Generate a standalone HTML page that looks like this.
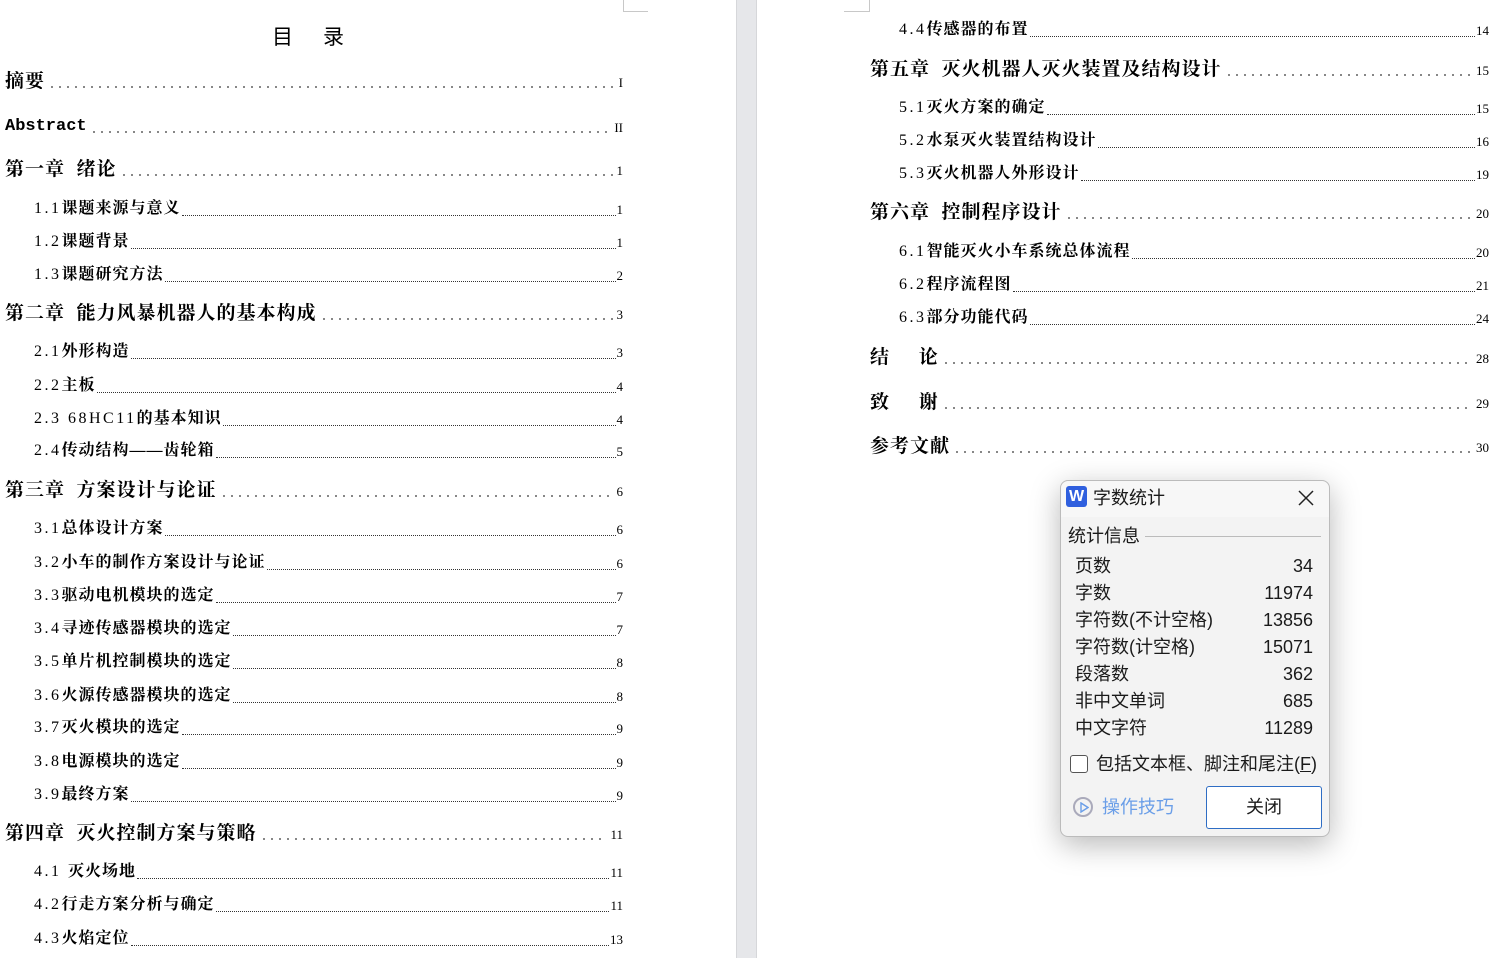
<!DOCTYPE html>
<html><head><meta charset="utf-8"><style>
*{margin:0;padding:0;box-sizing:border-box}
body{width:1496px;height:958px;overflow:hidden;background:#fff;position:relative;font-family:"Liberation Serif","Noto Serif CJK SC",serif;color:#000}
.gut{position:absolute;left:736px;top:0;width:21px;height:958px;background:#e6e7ea;border-left:1px solid #d6d7da;border-right:1px solid #d6d7da}
.cm{position:absolute;border-color:#c8c8c8;border-style:solid;border-width:0}
.r{position:absolute;display:flex;align-items:flex-end;height:24px;white-space:nowrap}
.r .t{line-height:24px;font-weight:bold}
.r .t i{font-style:normal;font-weight:normal;letter-spacing:2.5px}
.r .l{flex:1;margin:0 3px 6px 3px;height:2px}
.c .t{font-size:19px;letter-spacing:1px}
.c .l{background:radial-gradient(circle,#666 0.8px,transparent 1.1px) 0 0/8px 2px repeat-x}
.s .t{font-size:16px;letter-spacing:1px}
.s .l{border-bottom:1px dotted #333;height:1px;margin-bottom:5px;margin-left:1px;margin-right:1px}
.r .n{font-size:13px;line-height:22px}
.dlg{position:absolute;left:1060px;top:480px;width:270px;height:357px;background:#f3f3f3;border:1px solid #bbb;border-radius:8px;box-shadow:0 8px 30px rgba(0,0,0,.28);font-family:"Liberation Sans","Noto Sans CJK SC",sans-serif;color:#1a1a1a}
.dlg .row{position:absolute;left:14px;right:16px;display:flex;justify-content:space-between;font-size:18px;line-height:26px}
</style></head><body>
<div class="cm" style="left:623px;top:0;width:25px;height:12px;border-left-width:1px;border-bottom-width:1px"></div>
<div class="cm" style="left:844px;top:0;width:26px;height:12px;border-right-width:1px;border-bottom-width:1px"></div>
<div class="gut"></div>
<div style="position:absolute;left:272px;top:21px;font-size:21px;font-family:'Noto Sans CJK SC',sans-serif;letter-spacing:30px">目录</div>

<div class="r c" style="left:5px;width:618px;top:70px"><span class="t">摘要</span><span class="l"></span><span class="n">I</span></div>
<div class="r c" style="left:5px;width:618px;top:115px"><span class="t" style="font-family:'Liberation Mono',monospace;font-size:17px;letter-spacing:0">Abstract</span><span class="l"></span><span class="n">II</span></div>
<div class="r c" style="left:5px;width:618px;top:158px"><span class="t">第一章&nbsp;&nbsp;绪论</span><span class="l"></span><span class="n">1</span></div>
<div class="r s" style="left:34px;width:589px;top:197px"><span class="t"><i>1.1</i>课题来源与意义</span><span class="l"></span><span class="n">1</span></div>
<div class="r s" style="left:34px;width:589px;top:230px"><span class="t"><i>1.2</i>课题背景</span><span class="l"></span><span class="n">1</span></div>
<div class="r s" style="left:34px;width:589px;top:263px"><span class="t"><i>1.3</i>课题研究方法</span><span class="l"></span><span class="n">2</span></div>
<div class="r c" style="left:5px;width:618px;top:302px"><span class="t">第二章&nbsp;&nbsp;能力风暴机器人的基本构成</span><span class="l"></span><span class="n">3</span></div>
<div class="r s" style="left:34px;width:589px;top:340px"><span class="t"><i>2.1</i>外形构造</span><span class="l"></span><span class="n">3</span></div>
<div class="r s" style="left:34px;width:589px;top:374px"><span class="t"><i>2.2</i>主板</span><span class="l"></span><span class="n">4</span></div>
<div class="r s" style="left:34px;width:589px;top:407px"><span class="t"><i>2.3 68HC11</i>的基本知识</span><span class="l"></span><span class="n">4</span></div>
<div class="r s" style="left:34px;width:589px;top:439px"><span class="t"><i>2.4</i>传动结构——齿轮箱</span><span class="l"></span><span class="n">5</span></div>
<div class="r c" style="left:5px;width:618px;top:479px"><span class="t">第三章&nbsp;&nbsp;方案设计与论证</span><span class="l"></span><span class="n">6</span></div>
<div class="r s" style="left:34px;width:589px;top:517px"><span class="t"><i>3.1</i>总体设计方案</span><span class="l"></span><span class="n">6</span></div>
<div class="r s" style="left:34px;width:589px;top:551px"><span class="t"><i>3.2</i>小车的制作方案设计与论证</span><span class="l"></span><span class="n">6</span></div>
<div class="r s" style="left:34px;width:589px;top:584px"><span class="t"><i>3.3</i>驱动电机模块的选定</span><span class="l"></span><span class="n">7</span></div>
<div class="r s" style="left:34px;width:589px;top:617px"><span class="t"><i>3.4</i>寻迹传感器模块的选定</span><span class="l"></span><span class="n">7</span></div>
<div class="r s" style="left:34px;width:589px;top:650px"><span class="t"><i>3.5</i>单片机控制模块的选定</span><span class="l"></span><span class="n">8</span></div>
<div class="r s" style="left:34px;width:589px;top:684px"><span class="t"><i>3.6</i>火源传感器模块的选定</span><span class="l"></span><span class="n">8</span></div>
<div class="r s" style="left:34px;width:589px;top:716px"><span class="t"><i>3.7</i>灭火模块的选定</span><span class="l"></span><span class="n">9</span></div>
<div class="r s" style="left:34px;width:589px;top:750px"><span class="t"><i>3.8</i>电源模块的选定</span><span class="l"></span><span class="n">9</span></div>
<div class="r s" style="left:34px;width:589px;top:783px"><span class="t"><i>3.9</i>最终方案</span><span class="l"></span><span class="n">9</span></div>
<div class="r c" style="left:5px;width:618px;top:822px"><span class="t">第四章&nbsp;&nbsp;灭火控制方案与策略</span><span class="l"></span><span class="n">11</span></div>
<div class="r s" style="left:34px;width:589px;top:860px"><span class="t"><i>4.1 </i>灭火场地</span><span class="l"></span><span class="n">11</span></div>
<div class="r s" style="left:34px;width:589px;top:893px"><span class="t"><i>4.2</i>行走方案分析与确定</span><span class="l"></span><span class="n">11</span></div>
<div class="r s" style="left:34px;width:589px;top:927px"><span class="t"><i>4.3</i>火焰定位</span><span class="l"></span><span class="n">13</span></div>

<div class="r s" style="left:899px;width:590px;top:18px"><span class="t"><i>4.4</i>传感器的布置</span><span class="l"></span><span class="n">14</span></div>
<div class="r c" style="left:870px;width:619px;top:58px"><span class="t">第五章&nbsp;&nbsp;灭火机器人灭火装置及结构设计</span><span class="l"></span><span class="n">15</span></div>
<div class="r s" style="left:899px;width:590px;top:96px"><span class="t"><i>5.1</i>灭火方案的确定</span><span class="l"></span><span class="n">15</span></div>
<div class="r s" style="left:899px;width:590px;top:129px"><span class="t"><i>5.2</i>水泵灭火装置结构设计</span><span class="l"></span><span class="n">16</span></div>
<div class="r s" style="left:899px;width:590px;top:162px"><span class="t"><i>5.3</i>灭火机器人外形设计</span><span class="l"></span><span class="n">19</span></div>
<div class="r c" style="left:870px;width:619px;top:201px"><span class="t">第六章&nbsp;&nbsp;控制程序设计</span><span class="l"></span><span class="n">20</span></div>
<div class="r s" style="left:899px;width:590px;top:240px"><span class="t"><i>6.1</i>智能灭火小车系统总体流程</span><span class="l"></span><span class="n">20</span></div>
<div class="r s" style="left:899px;width:590px;top:273px"><span class="t"><i>6.2</i>程序流程图</span><span class="l"></span><span class="n">21</span></div>
<div class="r s" style="left:899px;width:590px;top:306px"><span class="t"><i>6.3</i>部分功能代码</span><span class="l"></span><span class="n">24</span></div>
<div class="r c" style="left:870px;width:619px;top:346px"><span class="t">结&nbsp;&nbsp;&nbsp;&nbsp;&nbsp;论</span><span class="l"></span><span class="n">28</span></div>
<div class="r c" style="left:870px;width:619px;top:391px"><span class="t">致&nbsp;&nbsp;&nbsp;&nbsp;&nbsp;谢</span><span class="l"></span><span class="n">29</span></div>
<div class="r c" style="left:870px;width:619px;top:435px"><span class="t">参考文献</span><span class="l"></span><span class="n">30</span></div>

<div class="dlg">
 <div style="position:absolute;left:0;top:0;right:0;height:36px;background:#f7f7f7;border-radius:8px 8px 0 0"></div>
 <div style="position:absolute;left:5px;top:5px;width:21px;height:21px;background:#2f5fde;border-radius:3px;color:#fff;font-weight:bold;font-size:16px;line-height:21px;text-align:center">W</div>
 <div style="position:absolute;left:32px;top:4px;font-size:18px;line-height:26px">字数统计</div>
 <svg style="position:absolute;left:237px;top:9px" width="16" height="16"><path d="M1 1L15 15M15 1L1 15" stroke="#222" stroke-width="1.5"/></svg>
 <div style="position:absolute;left:7px;top:42px;font-size:18px;line-height:26px">统计信息</div>
 <div style="position:absolute;left:84px;right:8px;top:55px;border-top:1px solid #bbb"></div>
 <div class="row" style="top:72px"><span>页数</span><span>34</span></div>
 <div class="row" style="top:99px"><span>字数</span><span>11974</span></div>
 <div class="row" style="top:126px"><span>字符数(不计空格)</span><span>13856</span></div>
 <div class="row" style="top:153px"><span>字符数(计空格)</span><span>15071</span></div>
 <div class="row" style="top:180px"><span>段落数</span><span>362</span></div>
 <div class="row" style="top:207px"><span>非中文单词</span><span>685</span></div>
 <div class="row" style="top:234px"><span>中文字符</span><span>11289</span></div>
 <div style="position:absolute;left:9px;top:274px;width:18px;height:18px;border:1px solid #555;border-radius:3px;background:#fff"></div>
 <div style="position:absolute;left:35px;top:270px;font-size:18px;line-height:26px">包括文本框、脚注和尾注(<u>F</u>)</div>
 <div style="position:absolute;left:12px;top:316px;width:20px;height:20px;border:2px solid #aab;border-radius:50%"></div>
 <svg style="position:absolute;left:19px;top:321px" width="9" height="11"><path d="M1 1L8 5.5L1 10Z" fill="none" stroke="#6a9ee8" stroke-width="1.4"/></svg>
 <div style="position:absolute;left:41px;top:313px;font-size:18px;line-height:26px;color:#6a9ee8">操作技巧</div>
 <div style="position:absolute;left:145px;top:305px;width:116px;height:43px;border:1px solid #2e6dc4;border-radius:3px;background:#fff;font-size:18px;line-height:41px;text-align:center">关闭</div>
</div>
</body></html>
